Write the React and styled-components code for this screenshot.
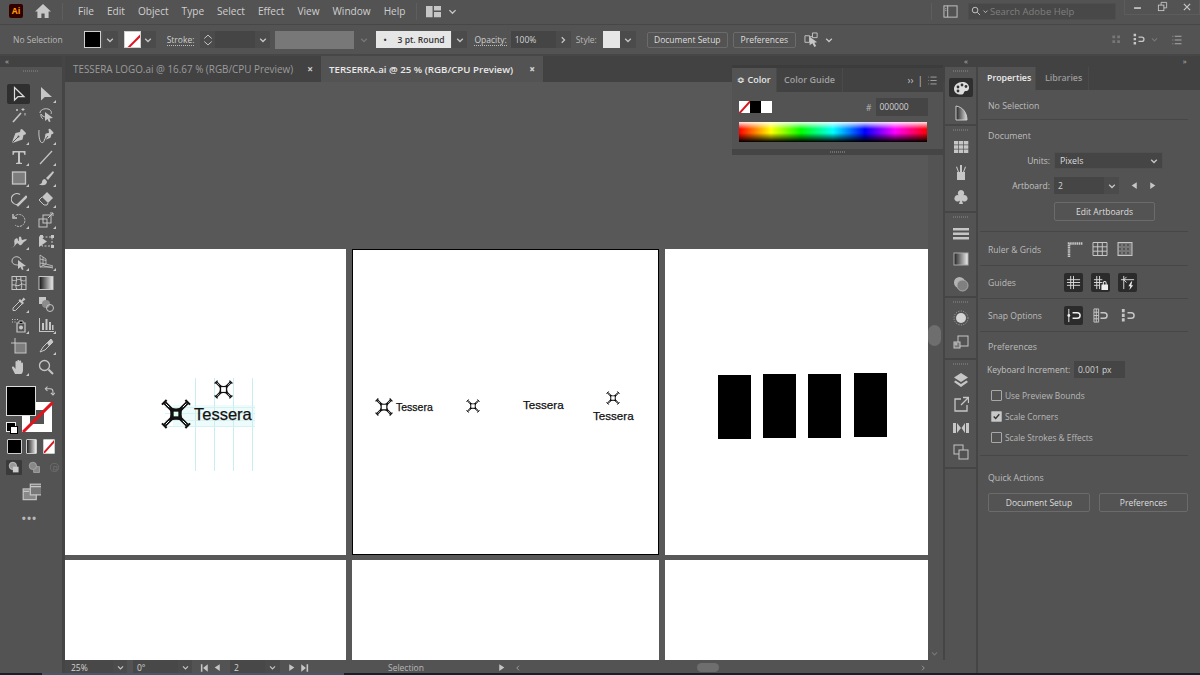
import React from 'react'
import styled, { createGlobalStyle } from 'styled-components'

const GlobalStyle = createGlobalStyle`
  html, body { margin: 0; padding: 0; overflow: hidden; background: #535353; }
  * { box-sizing: border-box; }
  body { font-family: "Open Sans", "Liberation Sans", sans-serif; font-size: 9px; color: #c8c8c8; }
`

// all the little drawings, 16x16 unless a caller says otherwise
const g = '#c6c6c6'
const ICONS = {
  home: <path fill={g} d="M8 1 0 8.5h2.4V15h4V10.500h3.200V15h4V8.500H16z" />,
  workspace: <path fill={g} d="M0 2h7v12H0zM8.500 2H16v5H8.500zM8.500 8.500H16V14H8.500z" />,
  panel: <g fill="none" stroke={g}><rect x="1" y="2" width="14" height="12" /><path d="M5 2v12" /><path d="M2.500 5h1M2.500 7h1" /></g>,
  search: <g fill="none" stroke={g} strokeWidth="1.500"><circle cx="6.500" cy="6.500" r="4.500" /><path d="M10 10l4.500 4.500" /></g>,
  minimize: <path fill={g} d="M3 9h10v2.500H3z" />,
  restore: <g fill="none" stroke={g} strokeWidth="1.300"><rect x="2" y="6" width="8" height="8" /><path d="M6 6V2h8v8h-4" /></g>,
  close: <path fill="none" stroke={g} strokeWidth="2" d="M3 3l10 10M13 3 3 13" />,
  isolate: <g><path fill="none" stroke={g} d="M1 4h5v7H1zM6 5h3M9 1h5v5H9z" /><path fill={g} d="M6 5l8 6-3 .5 2 3.500-2 1-2-4-3 2z" /></g>,
  align: <g fill={g}><path d="M2 1h3v3H2zM2 6h3v3H2zM2 11h3v3H2z" /><path fill="none" stroke={g} strokeWidth="1.600" d="M8 5h4a2.700 2.700 0 0 1 0 5.400H8" /></g>,
  dimGrid: <path fill="#777" d="M2 2h4v4H2zM9 2h4v4H9zM2 9h4v4H2zM9 9h4v4H9z" />,
  list: <path fill="none" stroke={g} d="M2 3h1M5 3h9M2 8h1M5 8h9M2 13h1M5 13h9" />,

  select: <path fill="none" stroke="#ddd" strokeWidth="1.200" d="M3.500 1.500v12.500l3.500-3.300h6z" />,
  direct: <path fill={g} d="M3 1v13.500l3.800-3.500H14z" />,
  wand: <g fill="none" stroke={g}><path strokeWidth="1.600" d="M2 15 10 6" /><path d="M12 1v3M10.500 2.500h3M14 6v2.500M6 2v2M5 3h2" /></g>,
  lasso: <g><path fill="none" stroke={g} d="M2 6c0-3 4-5 8-4 3 .8 4 3 3 5M3 7c1 2 3 3 5 3M3 7c-.5 3 1 4 2 5" /><path fill={g} d="M7 5l8 6-3.500.5 1 3-1.500.5-1.500-3-2.500 2z" /></g>,
  pen: <g><path fill={g} d="M9.500 1.500 11 1l4 4-.5 1.500-2 .5-1 4.500-7 2.500-3.500 1 1-3.500L4.500 5l4.500-1z" /><path stroke="#535353" d="M1.500 14.500 7 9" /><circle cx="7.500" cy="8.500" r="1" fill="#535353" /></g>,
  curvature: <g><path fill={g} d="M10.500 1 12 .8 15.500 4.500l-.3 1.300-1.700.5-1 3.500-5 2-1.500 1 .6-2 .9-5 3.500-1z" /><path stroke="#535353" d="M6.500 12.500 10 8" /><path fill="none" stroke={g} d="M1 2c-.5 5 .5 12 2.500 12.500S6.500 13 6.500 11" /></g>,
  type: <path fill={g} d="M1.500 2h13v4h-1l-1-2.500H9v10l2 .5v1H5v-1l2-.5v-10H3.500L2.500 6h-1z" />,
  line: <path stroke={g} strokeWidth="1.200" d="M2 15 14 2" />,
  rect: <rect x="1.500" y="2" width="13" height="12" fill="#7d7d7d" stroke={g} strokeWidth="1.300" />,
  brush: <g fill={g}><path d="M15 1 8 8l2 2 6-7.500zM7 9c-2 0-3 1.500-3 3 0 1.200-1 2-3 2.500 3 1.500 8 1 8-3z" /></g>,
  shaper: <g fill="none" stroke={g} strokeWidth="1.200"><path d="M9 12.500A5.500 5.500 0 1 1 9 3.500" /><path fill={g} d="M6 14 15 5l1 1-9 9z" /></g>,
  eraser: <g><path fill={g} d="M9 1l6 6-5 5-6-6z" /><path fill="none" stroke={g} d="M4 6 1 9l5 5h3l1-2" /></g>,
  rotate: <g fill="none" stroke={g}><path d="M3 5a6 6 0 1 1 1 8" strokeDasharray="2 1" /><path strokeWidth="1.400" d="M2 2v4h4" /></g>,
  scale: <g fill="none" stroke={g}><rect x="1" y="7" width="8" height="8" /><rect x="5" y="3" width="8" height="8" /><path d="M10 6l5-5M12 1h3v3" /></g>,
  warp: <path fill={g} d="M0 15c2.500-.5 3.500-2 3.500-4S2.500 6.500 5 5.500 6.500 8 7.500 8 7 3.500 9 3.500s1 3.500 2.500 3.500 2-1 4.500-.5c-1 1.500-3 2-4 3.500s-2 3-3.500 2-1-2-2.500-1.500-2 3.500-5.500 4.500z" />,
  freeTransform: <g><path fill="none" stroke={g} strokeDasharray="2 1.500" d="M4 4h10v9H4z" /><path fill={g} d="M2 2h3v3H2zM13 2h3v3h-3zM13 12h3v3h-3zM1 3l8 5.500-8 5.500z" /></g>,
  shapeBuilder: <g><path fill="none" stroke={g} d="M1 7c0-3 3-5 6-4 2 .5 3 2 3 3M1 7c0 3 3 4 6 4" /><path fill={g} d="M7 6l8 6-3.500.5 1 3-1.500.5-1.500-3-2.500 2z" /></g>,
  perspective: <g fill="none" stroke={g} strokeWidth=".8"><path d="M2 1v12l6-3V5zM2 5l6 1.500M2 9l6 1M5 3v9M8 10l7 2M6 12l9 2M2 13h13" /></g>,
  mesh: <g fill="none" stroke={g}><rect x="1" y="1.500" width="14" height="13" /><path d="M1 5c4 2 5-2 9 0s4 0 5 0M1 10c3-1 5 2 8 0s4 0 6 0M5 1.500c2 4-2 8 1 13M10 1.500c-1 4 2 8 0 13" /></g>,
  gradient: <g><defs><linearGradient id="gt"><stop offset="0" stopColor="#111" /><stop offset="1" stopColor="#eee" /></linearGradient></defs><rect x="1" y="1.500" width="14" height="13" fill="url(#gt)" stroke={g} /></g>,
  eyedropper: <g><path fill="none" stroke={g} d="M9 5 2 12v2.500h2.500L11 8" /><path fill={g} d="M9 3l1.500 1.500 2-3 2 2-3 2L13 7l-1.500 1.500-4-4z" /></g>,
  blend: <g><rect x="1" y="1" width="7" height="7" fill={g} /><circle cx="8" cy="8" r="4" fill="#8c8c8c" /><circle cx="12" cy="12" r="3.500" fill="none" stroke={g} /></g>,
  symbol: <g><path fill={g} d="M1 2h1v1H1zM3.500 2h1v1h-1zM6 2h1v1H6zM1 4.500h1v1H1zM3.500 4.500h1v1h-1z" /><path fill="none" stroke={g} strokeWidth="1.200" d="M6 6h8v9H6z" /><circle cx="10" cy="10.500" r="2" fill={g} /><path stroke={g} d="M8 6V4h4v2" /></g>,
  graph: <path fill={g} d="M1 1h1v13h14v1H1zM4 6h2v7H4zM7.500 2h2v11h-2zM11 5h2v8h-2zM14 8h1.500v5H14z" />,
  artboard: <g><rect x="4" y="5" width="11" height="10" fill="#7d7d7d" stroke={g} /><path fill="none" stroke={g} d="M4 0v5M0 5h4" /></g>,
  slice: <g><path fill="none" stroke={g} d="M13 1 5 9l-3 5 5-2 8-8z" /><path fill={g} d="M13 1 9 5l2 3 4-4z" /></g>,
  hand: <path fill={g} d="M4 15 1 9c-.5-1 1-2 2-1l1.500 2V3c0-1.200 1.800-1.200 1.800 0v4V1.800c0-1.200 2-1.200 2 0V7V2.500c0-1.200 1.900-1.200 1.900 0V8V4.500c0-1.200 1.800-1.200 1.800 0V11c0 2-1 4-2 4z" />,
  zoom: <g fill="none" stroke={g} strokeWidth="1.300"><circle cx="6.500" cy="6.500" r="5" /><path strokeWidth="2" d="M10.500 10.500 15 15" /></g>,
  swap: <g fill="none" stroke={g} strokeWidth="1.500"><path d="M2 4h7a4 4 0 0 1 4 4v5" /><path d="M5 1 2 4l3 3M10 10l3 3 3-3" /></g>,
  drawNormal: <g><circle cx="6" cy="6" r="4.500" fill="#999" stroke="#ccc" /><rect x="6" y="7" width="7" height="7" fill="#ccc" /></g>,
  drawBehind: <g><rect x="7" y="7" width="7" height="7" fill="#888" stroke="#aaa" /><circle cx="6" cy="6" r="4.500" fill="#888" stroke="#aaa" /></g>,
  drawInside: <g fill="none" stroke="#6f6f6f"><circle cx="8" cy="8" r="5" /><rect x="7" y="7" width="4" height="4" /></g>,
  screen: <g><rect x="1" y="5" width="11" height="9" fill="#888" stroke={g} /><rect x="7" y="1" width="11" height="9" fill="#777" stroke={g} /><path stroke={g} d="M1 7h5M7 3h11" /></g>,

  palette: <g><path fill="#ddd" d="M9 2c4 0 7 2 7 5.500 0 3-2 3.500-3.500 3.500-2 0-1 3-3.500 3.500C5 15 1 13 1 9s4-7 8-7z" /><g fill="#333"><circle cx="5" cy="7" r="1.400" /><circle cx="9" cy="5" r="1.400" /><circle cx="13" cy="6.500" r="1.400" /><circle cx="5" cy="11" r="1.400" /></g></g>,
  curve: <g><defs><linearGradient id="gc"><stop offset="0" stopColor="#222" /><stop offset="1" stopColor="#ddd" /></linearGradient></defs><path fill="url(#gc)" stroke="#ccc" d="M3 1v14h11C14 8 10 2 3 1z" /></g>,
  swatches: <path fill={g} d="M1 2h4.300v3.500H1zM6 2h4.300v3.500H6zM11 2h4.300v3.500H11zM1 6.300h4.300v3.500H1zM6 6.300h4.300v3.500H6zM11 6.300h4.300v3.500H11zM1 10.500h4.300V14H1zM6 10.500h4.300V14H6zM11 10.500h4.300V14H11z" />,
  jar: <g fill={g}><path d="M4 8h8v8H4zM7 1h2v7H7zM3 3l2 5h1L4 2.500zM13 3l-2 5h-1l2-5.500z" /></g>,
  club: <path fill={g} d="M8 1a3.200 3.200 0 0 1 2.500 5.200A3.200 3.200 0 1 1 9 11.500l1 3.500H6l1-3.500a3.200 3.200 0 1 1-1.500-5.300A3.200 3.200 0 0 1 8 1z" />,
  lines: <path fill={g} d="M0 2h16v2.500H0zM0 6.500h16v2.500H0zM0 11h16v2.500H0z" />,
  gradBox: <g><defs><linearGradient id="gb"><stop offset="0" stopColor="#222" /><stop offset="1" stopColor="#eee" /></linearGradient></defs><rect x="1" y="2" width="14" height="12" fill="url(#gb)" stroke="#aaa" /></g>,
  circles: <g><circle cx="6.500" cy="6.500" r="5.500" fill="#b4b4b4" /><circle cx="9.500" cy="9.500" r="5.500" fill="#808080" stroke="#aaa" /></g>,
  sun: <g><circle cx="8" cy="8" r="5" fill="#d4d4d4" /><circle cx="8" cy="8" r="7" fill="none" stroke="#aaa" strokeDasharray="1 1.500" /></g>,
  styles: <g fill="none" stroke={g}><rect x="5" y="2" width="10" height="10" /><rect x="1" y="8" width="6" height="6" fill="#777" /><circle cx="3" cy="10" r="1" /></g>,
  layers: <g fill={g}><path d="M8 1l7 4.500L8 10 1 5.500z" /><path d="M2.500 8.500 8 12l5.500-3.500L15 10l-7 5-7-5z" /></g>,
  exportBox: <g fill="none" stroke={g} strokeWidth="1.300"><path d="M8 3H2v12h12V9" /><path d="M8 9l7-7M10 1.500h5.500V7" /></g>,
  links: <path fill={g} d="M0 3h3v10H0zM4 3l4 5-4 5zM16 3h-3v10h3zM12 3 8.500 8l3.500 5z" />,
  pages: <g fill="none" stroke={g}><rect x="1" y="1" width="9" height="9" /><rect x="6" y="6" width="9" height="9" fill="#535353" /></g>,

  ruler: <path fill="none" stroke={g} strokeWidth="2.500" strokeDasharray="1.500 .6" d="M2 16V2.500h14" />,
  grid: <path fill="none" stroke={g} d="M1 1.500h14v13H1zM5.700 1.500v13M10.300 1.500v13M1 5.800h14M1 10.200h14" />,
  checker: <g><rect x="1" y="1.500" width="14" height="13" fill="#777" stroke={g} /><path stroke="#555" strokeWidth="2" strokeDasharray="2 2" d="M2 4h12M2 8h12M2 12h12" /></g>,
  guides: <path stroke="#ddd" fill="none" d="M5 1v14M8 1v14M1 5h14M1 8h14M1 11h14" />,
  guidesLock: <g><path stroke="#ddd" fill="none" d="M4 1v14M7 1v14M1 5h9M1 8h9M1 11h6" /><path fill="#eee" d="M9 10h7v6H9zM10.500 10V8.500a2 2 0 0 1 4 0V10h-1V8.500a1 1 0 0 0-2 0V10z" /></g>,
  smart: <g><path stroke="#ddd" fill="none" d="M4 1v14M1 5h14M7 2 4 5l3 3" /><path fill="#eee" d="M12 7 9 12h2l-1 4 4-5h-2l1-4z" /></g>,
  snapPoint: <g><path stroke="#eee" d="M3 1v14" /><circle cx="3" cy="8" r="1.500" fill="#eee" /><path fill="none" stroke="#eee" strokeWidth="1.600" d="M7 5h5a3 3 0 0 1 0 6H7" /></g>,
  snapGrid: <g><path fill="none" stroke={g} d="M1 1h5v14H1zM1 4.500h5M1 8h5M1 11.500h5M3.500 1v14" /><path fill="none" stroke={g} strokeWidth="1.600" d="M8 5h4a3 3 0 0 1 0 6H8" /></g>,
  snapGlyph: <g fill={g}><path d="M2 1h3v3.500H2zM2 6h3v3.500H2zM2 11h3v3.500H2z" /><path fill="none" stroke={g} strokeWidth="1.600" d="M8 5h4a3 3 0 0 1 0 6H8" /></g>,
  chevron: <path fill="none" stroke={g} strokeWidth="2" d="M3.500 6 8 10.500 12.500 6" />,
  chevronDim: <path fill="none" stroke="#777" strokeWidth="2" d="M3.500 6 8 10.500 12.500 6" />,
  right: <path fill="none" stroke={g} strokeWidth="2" d="M6 3.500 10.500 8 6 12.500" />,
  left: <path fill="none" stroke="#999" strokeWidth="2" d="M10 3.500 5.500 8 10 12.500" />,
  rightDim: <path fill="none" stroke="#999" strokeWidth="2" d="M6 3.500 10.500 8 6 12.500" />,
  triL: <path fill={g} d="M12 2v12L3 8z" />,
  triR: <path fill={g} d="M4 2v12l9-6z" />,
  firstL: <path fill={g} d="M3 2h2.500v12H3zM14 2v12L6.500 8z" />,
  lastR: <path fill={g} d="M13 2h-2.500v12H13zM2 2v12l7.500-6z" />,
  updown: <path fill="none" stroke={g} strokeWidth="1.300" d="M3 6l5-4.500L13 6M3 10l5 4.500L13 10" />,
  check: <path fill="none" stroke="#333" strokeWidth="2.400" d="M3 8l3.500 3.500L13 4" />,
}

const Svg = styled.svg`
  display: block;
  flex: none;
  width: ${p => p.$s || 16}px;
  height: ${p => p.$s || 16}px;
`
const Icon = ({ name, s }) => <Svg $s={s} viewBox="0 0 16 16">{ICONS[name]}</Svg>

// the four armed Tessera mark: double line arms with end caps, pinched centre
const Mark = ({ size, heavy }) => (
  <Svg $s={size} viewBox="0 0 32 32">
    <g fill="none" stroke="#111">
      <path d="M4 4l8 8M28 4l-8 8M4 28l8-8M28 28l-8-8" strokeWidth="4" />
      <path d="M1 6l5-5M26 1l5 5M1 26l5 5M31 26l-5 5" strokeWidth="2.200" />
    </g>
    <path fill="none" stroke="#fff" strokeWidth="1" d="M5 5l6 6M27 5l-6 6M5 27l6-6M27 27l-6-6" />
    <path fill="#111" d="M8.500 8.500Q16 11.500 23.500 8.500 20.500 16 23.500 23.500 16 20.500 8.500 23.500 11.500 16 8.500 8.500z" />
    {heavy
      ? <rect x="13.500" y="13.500" width="5" height="5" fill="#dfe" />
      : <rect x="12" y="12" width="8" height="8" fill="#fff" />}
  </Svg>
)

const App = styled.div`
  width: 1200px;
  height: 675px;
  overflow: hidden;
  display: flex;
  flex-direction: column;
  background: #535353;
  position: relative;
`

/* top menu */
const MenuBar = styled.div`
  height: 25px;
  flex: none;
  display: flex;
  align-items: center;
  background: #535353;
  border-bottom: 1px solid #474747;
  padding-bottom: 2px;
`
const AiBadge = styled.div`
  width: 14px;
  height: 14px;
  margin-left: 9px;
  background: #330000;
  border-radius: 2px;
  color: #ff9a00;
  font-size: 8.500px;
  font-weight: 700;
  line-height: 14px;
  text-align: center;
`
const HomeSlot = styled.div`
  margin-left: 12px;
  margin-right: 11px;
`
const VBar = styled.div`
  width: 1px;
  height: 17px;
  background: #5e5e5e;
  margin-left: ${p => p.$ml || 0}px;
  margin-right: ${p => p.$mr || 0}px;
`
const MenuList = styled.nav`
  display: flex;
  gap: 13px;
  font-size: 10.100px;
  color: #cfcfcf;
`
const MenuTrail = styled.div`
  margin-left: auto;
  display: flex;
  align-items: center;
`
const SearchBox = styled.div`
  width: 148px;
  height: 17px;
  margin-left: 10px;
  background: #484848;
  border: 1px solid #4e4e4e;
  display: flex;
  align-items: center;
  padding-left: 2px;
  color: #7f7f7f;
  font-size: 9.500px;
  gap: 1px;
`
const WindowBtns = styled.div`
  margin-left: 8px;
  margin-top: -8px;
  width: 76px;
  height: 16px;
  display: flex;
  border: 1px solid #5c5c5c;
  border-top: 0;
  justify-content: space-around;
  align-items: center;
`

/* control bar */
const ControlBar = styled.div`
  height: 31px;
  flex: none;
  display: flex;
  align-items: center;
  background: #535353;
  border-bottom: 2px solid #474747;
  padding-left: 13px;
`
const Offset = styled.div`
  display: flex;
  align-items: center;
  flex: none;
  margin-left: ${p => p.$ml || 0}px;
`
const Label = styled.span`
  color: #b8b8b8;
  font-size: 8.500px;
  white-space: nowrap;
`
const DottedLabel = styled(Label)`
  color: #cfcfcf;
  border-bottom: 1px dotted #bbb;
  line-height: 11px;
`
const FillSwatch = styled.div`
  width: 17px;
  height: 17px;
  background: ${p => p.$bg || '#000'};
  border: 1px solid #cfcfcf;
  position: relative;
  overflow: hidden;
`
const RedSlash = styled.i`
  position: absolute;
  left: -4px;
  top: 50%;
  width: 28px;
  height: 2px;
  background: #e0141e;
  transform: rotate(-45deg);
`
const ChevBox = styled.div`
  width: ${p => p.$w || 15}px;
  height: ${p => p.$h || 17}px;
  background: ${p => p.$clear ? 'transparent' : '#4b4b4b'};
  display: flex;
  align-items: center;
  justify-content: center;
  flex: none;
`
const Field = styled.div`
  width: ${p => p.$w}px;
  height: ${p => p.$h || 17}px;
  background: ${p => p.$bg || '#454545'};
  color: #d4d4d4;
  font-size: 8.500px;
  line-height: ${p => p.$h || 17}px;
  padding-left: ${p => p.$pad ?? 4}px;
  flex: none;
  white-space: nowrap;
`
const StrokeBox = styled.div`
  width: 75px;
  height: 17px;
  background: #e6e6e6;
  color: #333;
  font-size: 8.500px;
  display: flex;
  align-items: center;
  gap: 11px;
  padding-left: 7px;
  font-weight: 600;
`
const OutlineBtn = styled.button`
  width: ${p => p.$w}px;
  height: ${p => p.$h || 16}px;
  margin-left: ${p => p.$ml || 0}px;
  padding: 0;
  background: #535353;
  border: 1px solid #6b6b6b;
  border-radius: 2px;
  color: #dedede;
  font-family: inherit;
  font-size: 8.500px;
  flex: none;
`

const Main = styled.div`
  flex: 1;
  min-height: 0;
  display: flex;
`

/* left tool column */
const ToolColumn = styled.aside`
  width: 65px;
  flex: none;
  display: flex;
  flex-direction: column;
  background: #535353;
  border-right: 3px solid #454545;
`
const PanelHead = styled.div`
  height: 11px;
  flex: none;
  background: #424242;
  color: #bbb;
  font-size: 8px;
  line-height: 10px;
  padding: 0 5px;
  letter-spacing: -1px;
  display: flex;
`
const HeadMark = styled.span`
  margin-left: ${p => p.$ml || 0}px;
`
const Grip = styled.div`
  height: 2px;
  width: ${p => p.$w || 16}px;
  flex: none;
  margin: ${p => p.$m || '3px auto 0'};
  background: repeating-linear-gradient(90deg, #6f6f6f 0 1px, transparent 1px 2px);
`
const ToolGrid = styled.div`
  display: grid;
  grid-template-columns: 23px 23px;
  column-gap: 4px;
  grid-auto-rows: 21px;
  padding: 12px 0 0 7px;
`
const ToolCell = styled.div`
  position: relative;
  display: flex;
  align-items: center;
  justify-content: center;
  border-radius: 2px;
  height: 20px;
  background: ${p => p.$on ? '#2f2f2f' : 'transparent'};
  ${p => p.$more && `
    &::after {
      content: '';
      position: absolute;
      right: 1px;
      bottom: 1px;
      border-left: 3px solid transparent;
      border-bottom: 3px solid #c6c6c6;
    }
  `}
`
const SwatchStack = styled.div`
  position: relative;
  height: 47px;
  width: 50px;
  margin: 8px 0 0 6px;
`
const BigFill = styled.div`
  position: absolute;
  left: 0;
  top: 0;
  width: 30px;
  height: 30px;
  background: #000;
  border: 1px solid #ddd;
  z-index: 2;
`
const BigStroke = styled.div`
  position: absolute;
  left: 16px;
  top: 16px;
  width: 30px;
  height: 30px;
  background: #535353;
  border: 8px solid #fff;
`
const BigSlash = styled.i`
  position: absolute;
  left: 16px;
  top: 45px;
  width: 42px;
  height: 2.500px;
  background: #e0141e;
  transform: rotate(-45deg);
  transform-origin: 0 0;
  z-index: 1;
`
const SwapSlot = styled.div`
  position: absolute;
  left: 38px;
  top: 0;
`
const DefaultSlot = styled.div`
  position: absolute;
  left: 0;
  top: 36px;
  width: 10px;
  height: 10px;
  background: #000;
  border: 1px solid #eee;
  &::after {
    content: '';
    position: absolute;
    left: 3px;
    top: 3px;
    width: 6px;
    height: 6px;
    background: #fff;
    border: 1px solid #000;
  }
`
const ModeRow = styled.div`
  display: flex;
  align-items: center;
  gap: ${p => p.$gap || 4}px;
  margin: ${p => p.$m};
`
const ModeBox = styled.div`
  width: ${p => p.$w || 15}px;
  height: 15px;
  background: ${p => p.$bg || 'transparent'};
  border: ${p => p.$line ? '1px solid #ccc' : '0'};
  position: relative;
  overflow: hidden;
  display: flex;
  align-items: center;
  justify-content: center;
  border-radius: 1px;
`
const Dots = styled.div`
  text-align: center;
  margin-top: 12px;
  padding-right: 3px;
  color: #b8b8b8;
  font-size: 11px;
  letter-spacing: 1px;
  font-weight: 700;
  line-height: 8px;
`

/* middle: tabs, canvas, status */
const Centre = styled.section`
  width: 880px;
  flex: none;
  display: flex;
  flex-direction: column;
  position: relative;
`
const TabStrip = styled.div`
  height: 26px;
  flex: none;
  display: flex;
  background: #424242;
`
const DocTab = styled.div`
  width: ${p => p.$w}px;
  background: ${p => p.$on ? '#535353' : '#424242'};
  color: ${p => p.$on ? '#e8e8e8' : '#9c9c9c'};
  font-size: ${p => p.$on ? 9.7 : 9.9}px;
  font-weight: ${p => p.$on ? 600 : 500};
  display: flex;
  align-items: center;
  justify-content: space-between;
  padding: 0 8px 0 8px;
  white-space: nowrap;
  b { font-size: 10px; color: #d0d0d0; }
`
const CanvasRow = styled.div`
  height: 578px;
  flex: none;
  display: flex;
  background: #585858;
`
const Pasteboard = styled.div`
  width: 863px;
  flex: none;
  overflow: hidden;
  display: grid;
  grid-template-columns: 281px 307px 263px;
  grid-template-rows: 306px 100px;
  gap: 5px 6px;
  padding-top: 167px;
`
const Artboard = styled.div`
  position: relative;
  background: #fff;
  border: ${p => p.$active ? '1px solid #000' : '0'};
`
const Place = styled.div`
  position: absolute;
  left: ${p => p.$x}px;
  top: ${p => p.$y}px;
`
const Brand = styled.span`
  position: absolute;
  left: ${p => p.$x}px;
  top: ${p => p.$y}px;
  font-family: "Liberation Sans", Arial, sans-serif;
  font-size: ${p => p.$size}px;
  line-height: 1;
  color: #111;
  white-space: nowrap;
  -webkit-text-stroke: .25px #111;
`
const GuideV = styled.i`
  position: absolute;
  left: ${p => p.$x}px;
  top: 129px;
  width: 1px;
  height: 93px;
  background: #c9eef0;
`
const GuideH = styled.i`
  position: absolute;
  left: 100px;
  top: ${p => p.$y}px;
  width: 90px;
  height: 1px;
  background: #d4f3f4;
`
const GuideWash = styled.i`
  position: absolute;
  left: 108px;
  top: 156px;
  width: 82px;
  height: 22px;
  background: #effbfb;
`
const BlackBar = styled.i`
  position: absolute;
  left: ${p => p.$x}px;
  top: ${p => p.$y}px;
  width: 33px;
  height: 64px;
  background: #000;
`
const VScroll = styled.div`
  width: 17px;
  flex: none;
  background: #535353;
  border-right: 2px solid #454545;
  position: relative;
  display: flex;
  flex-direction: column;
  justify-content: space-between;
  align-items: center;
  padding: 0 2px 2px 0;
`
const VThumb = styled.i`
  position: absolute;
  left: 0;
  top: 243px;
  width: 13px;
  height: 21px;
  background: #6e6e6e;
  border-radius: 7px;
`
const StatusBar = styled.div`
  height: 15px;
  flex: none;
  display: flex;
  align-items: center;
  background: #535353;
  color: #c4c4c4;
  font-size: 8.500px;
`
const HThumb = styled.i`
  width: 22px;
  height: 9px;
  background: #6e6e6e;
  border-radius: 5px;
  margin-left: 175px;
  flex: none;
`

/* floating colour panel */
const FloatPanel = styled.div`
  position: absolute;
  left: 667px;
  top: 9px;
  width: 211px;
  height: 90px;
  background: #535353;
  border-top: 3px solid #3c3c3c;
  display: flex;
  flex-direction: column;
  z-index: 4;
`
const FloatTabs = styled.div`
  height: 24px;
  flex: none;
  background: #424242;
  display: flex;
  align-items: center;
  font-size: 9px;
  font-weight: 600;
`
const FloatTab = styled.div`
  width: ${p => p.$w}px;
  height: 24px;
  line-height: 24px;
  text-align: center;
  background: ${p => p.$on ? '#535353' : 'transparent'};
  color: ${p => p.$on ? '#e6e6e6' : '#a0a0a0'};
  border-right: 1px solid #4a4a4a;
`
const FloatTrail = styled.div`
  margin-left: auto;
  padding-right: 5px;
  display: flex;
  align-items: center;
  gap: 4px;
  color: #c0c0c0;
  font-size: 10px;
  font-weight: 400;
`
const ColourRow = styled.div`
  display: flex;
  align-items: center;
  height: 18px;
  margin-top: 6px;
  padding-left: 7px;
`
const MiniSwatch = styled.div`
  width: 11px;
  height: 12px;
  background: ${p => p.$bg};
  position: relative;
  overflow: hidden;
`
const MiniSlash = styled.i`
  position: absolute;
  left: -3px;
  top: 5px;
  width: 18px;
  height: 2px;
  background: #d81820;
  transform: rotate(-48deg);
`
const Spectrum = styled.div`
  width: 188px;
  height: 20px;
  margin: 6px 0 0 7px;
  background:
    linear-gradient(180deg, rgba(255,255,255,.9) 0%, rgba(255,255,255,0) 35%, rgba(0,0,0,0) 55%, #000 100%),
    linear-gradient(90deg, #f00 0%, #ff0 17%, #0f0 33%, #0ff 50%, #00f 67%, #f0f 83%, #f00 100%);
`
const FloatFoot = styled.div`
  margin-top: auto;
  height: 6px;
  background: #454545;
  display: flex;
  align-items: center;
`

/* right dock + properties */
const RightSide = styled.div`
  flex: 1;
  min-width: 0;
  display: flex;
  flex-direction: column;
`
const RightBody = styled.div`
  flex: 1;
  min-height: 0;
  display: flex;
`
const Dock = styled.div`
  width: 33px;
  flex: none;
  border-right: 2px solid #454545;
  display: flex;
  flex-direction: column;
`
const DockGroup = styled.div`
  height: ${p => p.$h}px;
  flex: none;
  border-bottom: 2px solid #454545;
  display: flex;
  flex-direction: column;
  align-items: center;
  gap: ${p => p.$gap || 8}px;
`
const DockIcon = styled.div`
  width: 24px;
  height: ${p => p.$h || 19}px;
  display: flex;
  align-items: center;
  justify-content: center;
  background: ${p => p.$on ? '#2f2f2f' : 'transparent'};
  border-radius: 2px;
`
const Props = styled.div`
  flex: 1;
  min-width: 0;
  display: flex;
  flex-direction: column;
`
const PropTabs = styled.div`
  height: 23px;
  flex: none;
  display: flex;
  background: #424242;
`
const PropTab = styled.div`
  width: ${p => p.$w}px;
  background: ${p => p.$on ? '#535353' : 'transparent'};
  color: ${p => p.$on ? '#ececec' : '#9a9a9a'};
  font-size: 8.800px;
  font-weight: 600;
  line-height: 22px;
  padding-left: 9px;
  border-right: 1px solid #4a4a4a;
`
const Section = styled.div`
  height: ${p => p.$h}px;
  flex: none;
  margin: 0 12px 0 2px;
  padding-left: 8px;
  border-bottom: ${p => p.$last ? '0' : '1px solid #474747'};
  display: flex;
  flex-direction: column;
`
const SectionTitle = styled.div`
  color: #bcbcbc;
  font-size: 8.800px;
  line-height: 12px;
  margin-top: ${p => p.$mt}px;
`
const InlineSection = styled(Section)`
  flex-direction: row;
  align-items: center;
`
const InlineTitle = styled.div`
  width: 76px;
  flex: none;
  color: #bcbcbc;
  font-size: 8.600px;
  padding-top: 2px;
`
const IconRow = styled.div`
  display: flex;
  gap: ${p => p.$gap || 8}px;
  margin-left: ${p => p.$ml || 0}px;
  margin-top: ${p => p.$mt || 0}px;
`
const IconBox = styled.div`
  width: 19px;
  height: 19px;
  display: flex;
  align-items: center;
  justify-content: center;
  border-radius: 2px;
  background: ${p => p.$on ? '#2b2b2b' : 'transparent'};
`
const FormRow = styled.div`
  display: flex;
  align-items: center;
  margin-top: ${p => p.$mt}px;
`
const FormLabel = styled.div`
  width: 66px;
  flex: none;
  text-align: right;
  padding-right: 4px;
  color: #c2c2c2;
  font-size: 8.500px;
  white-space: nowrap;
`
const KeyLabel = styled.div`
  width: 83px;
  flex: none;
  margin-left: -1px;
  color: #c2c2c2;
  font-size: 8.500px;
  white-space: nowrap;
`
const SelectBox = styled.div`
  width: 109px;
  height: 17px;
  background: #454545;
  border: 1px solid #505050;
  color: #dcdcdc;
  font-size: 8.800px;
  display: flex;
  align-items: center;
  justify-content: space-between;
  padding: 0 3px 0 5px;
`
const ButtonSlot = styled.div`
  margin: 8px 0 0 66px;
`
const CheckList = styled.div`
  margin-top: 7px;
`
const CheckRow = styled.div`
  display: flex;
  align-items: center;
  gap: 3px;
  height: 21px;
  padding-left: 3px;
  color: #b8b8b8;
  font-size: 8.400px;
`
const CheckBox = styled.div`
  width: 11px;
  height: 11px;
  border: 1px solid #a8a8a8;
  border-radius: 1px;
  background: ${p => p.$on ? '#c8c8c8' : 'transparent'};
`
const TaskStrip = styled.div`
  position: absolute;
  left: 0;
  bottom: 0;
  width: 1200px;
  height: 2px;
  background: linear-gradient(90deg, #14202c 0 42px, #46586a 42px 344px, #14202c 344px);
`

const TOOLS = [
  ['select', 0, 1], ['direct', 1], ['wand'], ['lasso'], ['pen', 1], ['curvature', 1],
  ['type', 1], ['line', 1], ['rect', 1], ['brush', 1], ['shaper', 1], ['eraser', 1],
  ['rotate', 1], ['scale', 1], ['warp', 1], ['freeTransform'], ['shapeBuilder', 1], ['perspective', 1],
  ['mesh'], ['gradient'], ['eyedropper', 1], ['blend'], ['symbol', 1], ['graph', 1],
  ['artboard'], ['slice', 1], ['hand', 1], ['zoom'],
]
const MENUS = ['File', 'Edit', 'Object', 'Type', 'Select', 'Effect', 'View', 'Window', 'Help']

export default function Illustrator() {
  return (
    <App>
      <GlobalStyle />
      <MenuBar>
        <AiBadge>Ai</AiBadge>
        <HomeSlot><Icon name="home" /></HomeSlot>
        <VBar $mr={15} />
        <MenuList>{MENUS.map(m => <span key={m}>{m}</span>)}</MenuList>
        <VBar $ml={10} $mr={9} />
        <Icon name="workspace" s={15} />
        <Offset $ml={6}><Icon name="chevron" s={11} /></Offset>
        <MenuTrail>
          <VBar $mr={11} />
          <Icon name="panel" s={15} />
          <SearchBox><Icon name="search" s={10} /><Icon name="chevron" s={7} />Search Adobe Help</SearchBox>
          <WindowBtns>
            <Icon name="minimize" s={11} />
            <Icon name="restore" s={11} />
            <Icon name="close" s={10} />
          </WindowBtns>
        </MenuTrail>
      </MenuBar>

      <ControlBar>
        <Label>No Selection</Label>
        <Offset $ml={21}><FillSwatch /></Offset>
        <Offset $ml={2}><ChevBox><Icon name="chevron" s={10} /></ChevBox></Offset>
        <Offset $ml={6}><FillSwatch $bg="#fff"><RedSlash /></FillSwatch></Offset>
        <Offset><ChevBox><Icon name="chevron" s={10} /></ChevBox></Offset>
        <Offset $ml={11}><DottedLabel>Stroke:</DottedLabel></Offset>
        <Offset $ml={6}><ChevBox><Icon name="updown" s={12} /></ChevBox></Offset>
        <Field $w={40} />
        <ChevBox><Icon name="chevron" s={10} /></ChevBox>
        <Offset $ml={5}><Field $w={79} $h={18} $bg="#787878" /></Offset>
        <Offset $ml={1}><ChevBox $w={17} $clear><Icon name="chevronDim" s={10} /></ChevBox></Offset>
        <Offset $ml={4}>
          <StrokeBox><span>•</span><span>3 pt. Round</span></StrokeBox>
        </Offset>
        <Offset $ml={1}><ChevBox><Icon name="chevron" s={10} /></ChevBox></Offset>
        <Offset $ml={7}><DottedLabel>Opacity:</DottedLabel></Offset>
        <Offset $ml={4}><Field $w={45}>100%</Field></Offset>
        <ChevBox><Icon name="right" s={10} /></ChevBox>
        <Offset $ml={5}><Label>Style:</Label></Offset>
        <Offset $ml={6}><Field $w={17} $bg="#e6e6e6" /></Offset>
        <ChevBox $w={16}><Icon name="chevron" s={10} /></ChevBox>
        <OutlineBtn $w={81} $ml={11}>Document Setup</OutlineBtn>
        <OutlineBtn $w={63} $ml={5}>Preferences</OutlineBtn>
        <Offset $ml={8}><Icon name="isolate" s={15} /></Offset>
        <Offset $ml={5}><Icon name="chevron" s={10} /></Offset>
        <Offset $ml={277}><Icon name="dimGrid" s={11} /></Offset>
        <Offset $ml={10}><Icon name="align" s={13} /></Offset>
        <Offset $ml={5}><Icon name="chevronDim" s={9} /></Offset>
        <Offset $ml={12}><Icon name="list" s={12} /></Offset>
      </ControlBar>

      <Main>
        <ToolColumn>
          <PanelHead>‹‹</PanelHead>
          <Grip />
          <ToolGrid>
            {TOOLS.map(([name, more, on]) => (
              <ToolCell key={name} $more={!!more} $on={!!on}><Icon name={name} /></ToolCell>
            ))}
          </ToolGrid>
          <SwatchStack>
            <BigFill />
            <BigStroke />
            <BigSlash />
            <SwapSlot><Icon name="swap" s={11} /></SwapSlot>
            <DefaultSlot />
          </SwatchStack>
          <ModeRow $m="6px 0 0 7px" $gap={4}>
            <ModeBox $bg="#000" $line />
            <ModeBox $w={11} $bg="linear-gradient(90deg,#222,#eee)" $line />
            <Offset $ml={2}><ModeBox $w={12} $bg="#fff" $line><MiniSlash /></ModeBox></Offset>
          </ModeRow>
          <ModeRow $m="6px 0 0 6px" $gap={0}>
            <ModeBox $w={17} $bg="#3a3a3a"><Icon name="drawNormal" s={13} /></ModeBox>
            <ModeBox $w={17}><Icon name="drawBehind" s={13} /></ModeBox>
            <ModeBox $w={17}><Icon name="drawInside" s={13} /></ModeBox>
          </ModeRow>
          <ModeRow $m="8px 0 0 22px"><Icon name="screen" s={19} /></ModeRow>
          <Dots>•••</Dots>
        </ToolColumn>

        <Centre>
          <TabStrip>
            <DocTab $w={256}>TESSERA LOGO.ai @ 16.67 % (RGB/CPU Preview)<b>×</b></DocTab>
            <DocTab $w={222} $on>TERSERRA.ai @ 25 % (RGB/CPU Preview)<b>×</b></DocTab>
          </TabStrip>
          <CanvasRow>
            <Pasteboard>
              <Artboard>
                <GuideWash />
                {[130, 149, 168, 187].map(x => <GuideV key={x} $x={x} />)}
                {[158, 164, 171, 177].map(y => <GuideH key={y} $y={y} />)}
                <Place $x={96} $y={150}><Mark size={30} heavy /></Place>
                <Place $x={149} $y={131}><Mark size={19} /></Place>
                <Brand $x={129} $y={157} $size={16.500}>Tessera</Brand>
              </Artboard>
              <Artboard $active>
                <Place $x={22} $y={148}><Mark size={18} /></Place>
                <Brand $x={43} $y={152} $size={10.500}>Tessera</Brand>
                <Place $x={113} $y={149}><Mark size={14} /></Place>
                <Brand $x={170} $y={149} $size={11.600}>Tessera</Brand>
                <Place $x={253} $y={141}><Mark size={14} /></Place>
                <Brand $x={240} $y={160} $size={11.600}>Tessera</Brand>
              </Artboard>
              <Artboard>
                <BlackBar $x={53} $y={126} />
                <BlackBar $x={98} $y={125} />
                <BlackBar $x={143} $y={125} />
                <BlackBar $x={189} $y={124} />
              </Artboard>
              <Artboard />
              <Artboard />
              <Artboard />
            </Pasteboard>
            <VScroll>
              <span />
              <VThumb />
              <Icon name="chevronDim" s={9} />
            </VScroll>
          </CanvasRow>
          <StatusBar>
            <Field $w={48} $h={15} $pad={6} $bg="#484848">25%</Field>
            <ChevBox $w={14} $h={15}><Icon name="chevron" s={9} /></ChevBox>
            <Offset $ml={6}><Field $w={45} $h={15} $bg="#484848">0°</Field></Offset>
            <ChevBox $w={14} $h={15}><Icon name="chevron" s={9} /></ChevBox>
            <Offset $ml={7}><Icon name="firstL" s={10} /></Offset>
            <Offset $ml={4}><Icon name="triL" s={9} /></Offset>
            <Offset $ml={8}><Field $w={35} $h={15} $bg="#484848">2</Field></Offset>
            <ChevBox $w={15} $h={15}><Icon name="chevron" s={9} /></ChevBox>
            <Offset $ml={7}><Icon name="triR" s={9} /></Offset>
            <Offset $ml={4}><Icon name="lastR" s={10} /></Offset>
            <Offset $ml={78}><Label>Selection</Label></Offset>
            <Offset $ml={73}><Icon name="triR" s={9} /></Offset>
            <Offset $ml={8}><Icon name="left" s={8} /></Offset>
            <HThumb />
            <Offset $ml={200}><Icon name="rightDim" s={8} /></Offset>
          </StatusBar>
          <FloatPanel>
            <FloatTabs>
              <FloatTab $w={45} $on>≎ Color</FloatTab>
              <FloatTab $w={66}>Color Guide</FloatTab>
              <FloatTrail><span>››</span><span>|</span><Icon name="list" s={11} /></FloatTrail>
            </FloatTabs>
            <ColourRow>
              <MiniSwatch $bg="#fff"><MiniSlash /></MiniSwatch>
              <MiniSwatch $bg="#000" />
              <MiniSwatch $bg="#fff" />
              <Offset $ml={94}><Label>#</Label></Offset>
              <Offset $ml={4}><Field $w={52} $h={18}>000000</Field></Offset>
            </ColourRow>
            <Spectrum />
            <FloatFoot><Grip $w={16} $m="0 auto" /></FloatFoot>
          </FloatPanel>
        </Centre>

        <RightSide>
          <PanelHead><HeadMark $ml={14}>‹‹</HeadMark><HeadMark $ml={216}>››</HeadMark></PanelHead>
          <RightBody>
            <Dock>
              <DockGroup $h={59} $gap={6}>
                <Grip />
                <DockIcon $on><Icon name="palette" /></DockIcon>
                <DockIcon><Icon name="curve" /></DockIcon>
              </DockGroup>
              <DockGroup $h={87} $gap={6}>
                <Grip />
                <DockIcon><Icon name="swatches" /></DockIcon>
                <DockIcon><Icon name="jar" /></DockIcon>
                <DockIcon><Icon name="club" /></DockIcon>
              </DockGroup>
              <DockGroup $h={85} $gap={6}>
                <Grip />
                <DockIcon><Icon name="lines" /></DockIcon>
                <DockIcon><Icon name="gradBox" /></DockIcon>
                <DockIcon><Icon name="circles" /></DockIcon>
              </DockGroup>
              <DockGroup $h={62} $gap={5}>
                <Grip />
                <DockIcon><Icon name="sun" /></DockIcon>
                <DockIcon><Icon name="styles" /></DockIcon>
              </DockGroup>
              <DockGroup $h={109} $gap={5}>
                <Grip />
                <DockIcon><Icon name="layers" /></DockIcon>
                <DockIcon><Icon name="exportBox" /></DockIcon>
                <DockIcon><Icon name="links" /></DockIcon>
                <DockIcon><Icon name="pages" /></DockIcon>
              </DockGroup>
            </Dock>
            <Props>
              <PropTabs>
                <PropTab $w={58} $on>Properties</PropTab>
                <PropTab $w={53}>Libraries</PropTab>
              </PropTabs>
              <Section $h={30}><SectionTitle $mt={10}>No Selection</SectionTitle></Section>
              <Section $h={112}>
                <SectionTitle $mt={10}>Document</SectionTitle>
                <FormRow $mt={10}><FormLabel>Units:</FormLabel><SelectBox>Pixels<Icon name="chevron" s={10} /></SelectBox></FormRow>
                <FormRow $mt={8}>
                  <FormLabel>Artboard:</FormLabel>
                  <Field $w={50} $h={17}>2</Field>
                  <ChevBox $w={15}><Icon name="chevron" s={10} /></ChevBox>
                  <Offset $ml={11}><Icon name="triL" s={9} /></Offset>
                  <Offset $ml={9}><Icon name="triR" s={9} /></Offset>
                </FormRow>
                <ButtonSlot><OutlineBtn $w={101} $h={19}>Edit Artboards</OutlineBtn></ButtonSlot>
              </Section>
              <InlineSection $h={34}>
                <InlineTitle>Ruler &amp; Grids</InlineTitle>
                <IconRow $gap={9} $ml={3} $mt={1}><Icon name="ruler" /><Icon name="grid" /><Icon name="checker" /></IconRow>
              </InlineSection>
              <InlineSection $h={33}>
                <InlineTitle>Guides</InlineTitle>
                <IconRow><IconBox $on><Icon name="guides" s={15} /></IconBox><IconBox $on><Icon name="guidesLock" s={15} /></IconBox><IconBox $on><Icon name="smart" s={15} /></IconBox></IconRow>
              </InlineSection>
              <InlineSection $h={33}>
                <InlineTitle>Snap Options</InlineTitle>
                <IconRow><IconBox $on><Icon name="snapPoint" s={15} /></IconBox><IconBox><Icon name="snapGrid" s={15} /></IconBox><IconBox><Icon name="snapGlyph" s={15} /></IconBox></IconRow>
              </InlineSection>
              <Section $h={124}>
                <SectionTitle $mt={9}>Preferences</SectionTitle>
                <FormRow $mt={8}>
                  <KeyLabel>Keyboard Increment:</KeyLabel>
                  <Offset $ml={4}><Field $w={51} $h={17}>0.001 px</Field></Offset>
                </FormRow>
                <CheckList>
                  <CheckRow><CheckBox />Use Preview Bounds</CheckRow>
                  <CheckRow><CheckBox $on><Icon name="check" s={9} /></CheckBox>Scale Corners</CheckRow>
                  <CheckRow><CheckBox />Scale Strokes &amp; Effects</CheckRow>
                </CheckList>
              </Section>
              <Section $h={80} $last>
                <SectionTitle $mt={16}>Quick Actions</SectionTitle>
                <FormRow $mt={9}>
                  <OutlineBtn $w={102} $h={19}>Document Setup</OutlineBtn>
                  <OutlineBtn $w={89} $h={19} $ml={9}>Preferences</OutlineBtn>
                </FormRow>
              </Section>
            </Props>
          </RightBody>
        </RightSide>
      </Main>
      <TaskStrip />
    </App>
  )
}
